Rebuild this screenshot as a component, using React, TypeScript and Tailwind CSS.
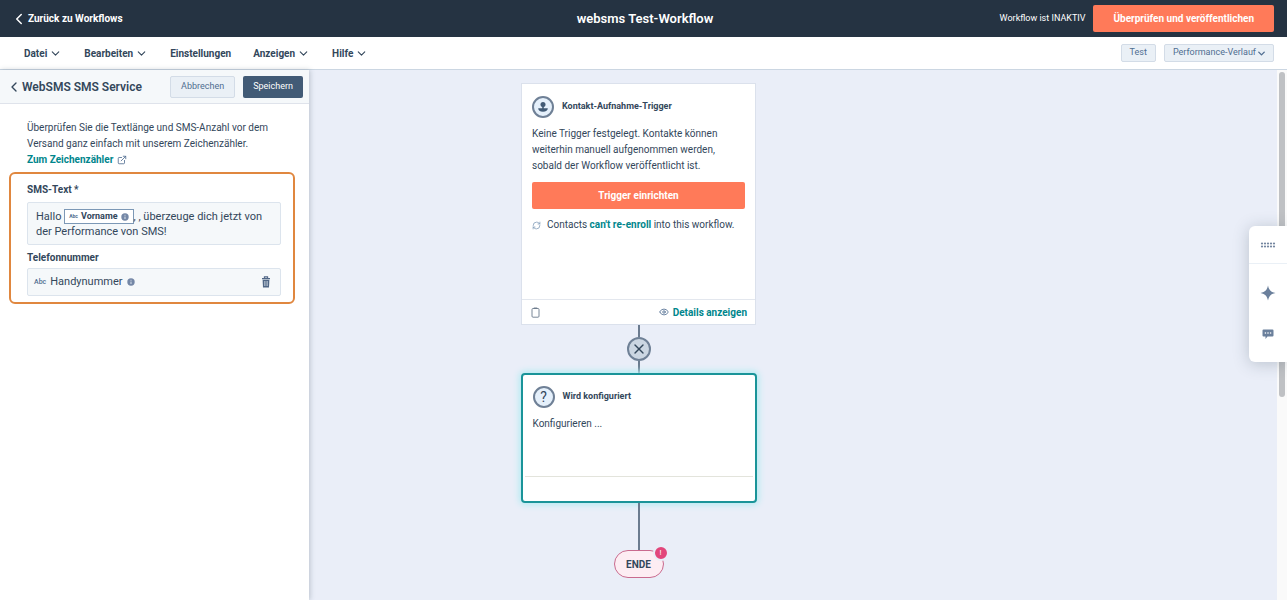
import type { ReactNode } from 'react';
import { ChevronDown, ChevronLeft, ExternalLink, Eye, RefreshCw, X } from 'lucide-react';

const MENU = [
  { label: 'Datei', dropdown: true },
  { label: 'Bearbeiten', dropdown: true },
  { label: 'Einstellungen', dropdown: false },
  { label: 'Anzeigen', dropdown: true },
  { label: 'Hilfe', dropdown: true },
];

function InfoDot() {
  return (
    <svg viewBox="0 0 8 8" className="size-2 shrink-0" aria-hidden="true">
      <circle cx="4" cy="4" r="3.7" fill="#7487a6" />
      <path d="M4 3.6v2.4M4 1.8v.9" stroke="#e8eef5" strokeWidth="0.9" />
    </svg>
  );
}

function TrashIcon() {
  return (
    <svg viewBox="0 0 10 12" className="h-3 w-[10px]" aria-hidden="true">
      <path d="M3.4 2V.9h3.2V2M1 2.6h8" fill="none" stroke="#516786" strokeWidth="1.1" />
      <path d="M1.6 3.8h6.8L8 11.4H2z" fill="#516786" />
      <path d="M3.6 5v5M5 5v5M6.4 5v5" stroke="#dfe7f0" strokeWidth="0.6" />
    </svg>
  );
}

function ClipboardIcon() {
  return (
    <svg viewBox="0 0 9 11" className="h-[11px] w-[9px]" fill="none" stroke="#6b7a8c" aria-hidden="true">
      <rect x="1" y="1.5" width="7" height="8.7" rx="1" strokeWidth="0.9" />
      <path d="M2.8 1.2h3.4" strokeWidth="1.3" />
    </svg>
  );
}

function NodeBadge({ children }: { children: ReactNode }) {
  return (
    <span className="flex size-[22px] shrink-0 items-center justify-center rounded-full border-2 border-[#6f8096] bg-[#e5f0fb] text-[#33475b]">
      {children}
    </span>
  );
}

function TopBar() {
  return (
    <header className="grid h-[37px] grid-cols-[1fr_auto_1fr] items-center bg-[#253342] pr-[13px] pl-4 text-white">
      <a href="#workflows" className="flex items-center text-[10px] font-bold">
        <ChevronLeft size={18} strokeWidth={2} className="-ml-1.5" />
        Zurück zu Workflows
      </a>
      <h1 className="text-[13px] font-semibold">websms Test-Workflow</h1>
      <div className="flex items-center justify-end gap-2">
        <span className="text-[9px]">Workflow ist INAKTIV</span>
        <button className="h-[27px] rounded-xs bg-[#ff7a59] px-5 text-[10px] font-bold">
          Überprüfen und veröffentlichen
        </button>
      </div>
    </header>
  );
}

function MenuBar() {
  return (
    <nav className="flex h-[33px] items-center border-b border-[#cbd6e2] bg-white pr-[13px] pl-6">
      <div className="flex items-center gap-[22px]">
        {MENU.map(item => (
          <button key={item.label} className="flex items-center gap-0.5 text-[10px] font-bold">
            {item.label}
            {item.dropdown && <ChevronDown size={13} strokeWidth={2} />}
          </button>
        ))}
      </div>
      <div className="ml-auto flex gap-2 text-[9px] text-[#506e91]">
        <button className="h-[18px] rounded-xs border border-[#d3dce7] bg-[#eaf0f6] px-2">Test</button>
        <button className="flex h-[18px] items-center rounded-xs border border-[#d3dce7] bg-[#eaf0f6] pr-1.5 pl-2">
          Performance-Verlauf
          <ChevronDown size={11} strokeWidth={3} />
        </button>
      </div>
    </nav>
  );
}

function ServicePanel() {
  return (
    <aside className="z-10 col-start-1 row-start-1 w-[309px] bg-white shadow-[1px_0_5px_rgba(45,62,80,0.25)]">
      <div className="flex h-[34px] items-center border-b border-[#dfe3eb] bg-[#f5f8fa] px-1.5">
        <button aria-label="Zurück">
          <ChevronLeft size={16} strokeWidth={2} />
        </button>
        <h2 className="text-[12px] font-semibold whitespace-nowrap">WebSMS SMS Service</h2>
        <div className="ml-auto flex gap-2 text-[9px]">
          <button className="h-[22px] rounded-xs border border-[#d3dce7] bg-[#eaf0f6] px-[10px] text-[#506e91]">
            Abbrechen
          </button>
          <button className="h-[22px] rounded-xs bg-[#425b76] px-[10px] text-white">Speichern</button>
        </div>
      </div>

      <div className="px-[9px] pt-4">
        <div className="px-[18px] text-[10px] leading-4">
          <p>Überprüfen Sie die Textlänge und SMS-Anzahl vor dem Versand ganz einfach mit unserem Zeichenzähler.</p>
          <a href="#zeichenzaehler" className="flex items-center gap-1 font-bold text-[#00868c]">
            Zum Zeichenzähler
            <ExternalLink size={10} className="text-[#506e91]" />
          </a>
        </div>

        <div className="mt-1 mr-[5px] rounded-md border-2 border-[#e0873f] pt-2 pr-3 pb-1.5 pl-4 text-[10px]">
          <span id="sms-label" className="block leading-4 font-bold">SMS-Text *</span>
          <div
            role="textbox"
            aria-multiline="true"
            aria-labelledby="sms-label"
            tabIndex={0}
            contentEditable
            suppressContentEditableWarning
            className="mt-1 rounded-xs border border-[#dce4ed] bg-[#f5f8fa] px-2 pt-1.5 pb-[5px] text-[11px] leading-[15px]"
          >
            <p className="flex items-center whitespace-pre">
              <span>Hallo </span>
              <span
                contentEditable={false}
                className="flex h-[15px] items-center gap-[3px] border border-[#7c98b6] bg-white px-1 text-[9px] font-bold"
              >
                <span className="text-[5px] text-[#506e91]">Abc</span>
                Vorname
                <InfoDot />
              </span>
              <span>, , überzeuge dich jetzt von</span>
            </p>
            <p>der Performance von SMS!</p>
          </div>

          <label htmlFor="phone" className="mt-[5px] block leading-4 font-bold">Telefonnummer</label>
          <div className="mt-0.5 flex h-7 items-center gap-1 rounded-xs border border-[#dce4ed] bg-[#f5f8fa] pr-[9px] pl-1.5">
            <span className="text-[7px] font-medium text-[#506e91]">Abc</span>
            <input
              id="phone"
              defaultValue="Handynummer"
              className="field-sizing-content bg-transparent text-[11px] outline-none"
            />
            <InfoDot />
            <button aria-label="Entfernen" className="ml-auto">
              <TrashIcon />
            </button>
          </div>
        </div>
      </div>
    </aside>
  );
}

function TriggerCard() {
  return (
    <section className="flex h-[242px] w-[235px] flex-col border border-[#dbe1ec] bg-white">
      <div className="flex-1 px-[10px] pt-3">
        <div className="flex items-center gap-2">
          <NodeBadge>
            <svg viewBox="0 0 12 12" className="size-3" fill="#425b76" aria-hidden="true">
              <circle cx="6" cy="3.4" r="2.5" />
              <path d="M5.2 5h1.6v2.2h4c0 2.2-1.8 3.6-4.8 3.6S1.2 9.4 1.2 7.2h4z" />
            </svg>
          </NodeBadge>
          <h3 className="text-[9px] font-bold">Kontakt-Aufnahme-Trigger</h3>
        </div>
        <p className="mt-2 text-[10px] leading-4">
          Keine Trigger festgelegt. Kontakte können weiterhin manuell aufgenommen werden, sobald der Workflow
          veröffentlicht ist.
        </p>
        <button className="mt-2 h-[27px] w-full rounded-xs bg-[#ff7a59] text-[10px] font-bold text-white">
          Trigger einrichten
        </button>
        <p className="mt-2 flex items-center text-[10px] leading-4">
          <RefreshCw size={9} className="mr-1.5 shrink-0 text-[#7c98b6]" />
          <span>
            Contacts <b className="font-bold text-[#00868c]">can't re-enroll</b> into this workflow.
          </span>
        </p>
      </div>
      <div className="flex h-[25px] items-center justify-between border-t border-[#e3e7ee] px-2">
        <button aria-label="Kopieren" className="pl-px">
          <ClipboardIcon />
        </button>
        <button className="flex items-center gap-1 text-[10px] font-bold text-[#00868c]">
          <Eye size={10} className="text-[#506e91]" />
          Details anzeigen
        </button>
      </div>
    </section>
  );
}

function Canvas() {
  return (
    <main className="col-start-1 row-start-1 flex flex-col items-center bg-[#eaeef8] pt-[13px]">
      <TriggerCard />
      <div className="h-3 w-0.5 bg-[#6b7b8f]" />
      <button
        aria-label="Aktion entfernen"
        className="flex size-6 items-center justify-center rounded-full border-2 border-[#6f8096] bg-[#cbd6e2]"
      >
        <X size={16} strokeWidth={2} />
      </button>
      <div className="h-3 w-0.5 bg-[#6b7b8f]" />

      <section className="flex h-[130px] w-[236px] flex-col rounded-sm border-2 border-[#1a9499] bg-white shadow-[0_0_6px_2px_#b5ebf2]">
        <div className="flex-1 px-[10px] pt-[11px]">
          <div className="flex items-center gap-2">
            <NodeBadge>
              <span className="text-[14px] leading-none">?</span>
            </NodeBadge>
            <h3 className="text-[9px] font-bold">Wird konfiguriert</h3>
          </div>
          <p className="mt-2 text-[10px] leading-4">Konfigurieren ...</p>
        </div>
        <div className="mx-0.5 h-[25px] border-t border-[#e3e4dc]" />
      </section>

      <div className="h-[47px] w-0.5 bg-[#6b7b8f]" />
      <div className="relative flex h-7 w-[50px] items-center justify-center rounded-full border border-[#c96a8e] bg-[#fdedf3] text-[10px] font-bold">
        ENDE
        <span className="absolute -top-1.5 -right-1.5 flex size-4 items-center justify-center rounded-full border-2 border-[#eaeef8] bg-[#e2467b] text-[8px] leading-none font-normal text-white">
          !
        </span>
      </div>
    </main>
  );
}

function ToolDock() {
  return (
    <div className="absolute top-[226px] right-0 z-20 flex w-[38px] flex-col items-center rounded-l-md bg-white shadow-[0_2px_16px_rgba(45,62,80,0.25)]">
      <button aria-label="Verschieben" className="flex h-[38px] w-full items-center justify-center border-b border-[#eaf0f6]">
        <svg viewBox="0 0 16 6" className="h-1.5 w-4" fill="#7486a0" aria-hidden="true">
          {[0, 1, 2, 3, 4].map(col => (
            <g key={col}>
              <circle cx={2 + col * 3} cy="1.5" r="1.1" />
              <circle cx={2 + col * 3} cy="4.5" r="1.1" />
            </g>
          ))}
        </svg>
      </button>
      <button aria-label="Assistent" className="mt-[21px]">
        <svg viewBox="0 0 16 16" className="size-4" fill="#6b809c" aria-hidden="true">
          <path d="M8 .5c.9 4.4 2.6 6.4 7.5 7.5-4.9 1.1-6.6 3.1-7.5 7.5C7.1 11.1 5.4 9.1.5 8 5.4 6.9 7.1 4.9 8 .5z" />
        </svg>
      </button>
      <button aria-label="Kommentare" className="mt-7 mb-[22px]">
        <svg viewBox="0 0 12 11" className="h-[11px] w-3" fill="#6b809c" aria-hidden="true">
          <path d="M1.5.5h9a1 1 0 0 1 1 1v5a1 1 0 0 1-1 1h-5l-2 2.5V7.500h-2a1 1 0 0 1-1-1v-5a1 1 0 0 1 1-1z" />
          <g fill="#fff">
            <circle cx="3.4" cy="4" r=".8" />
            <circle cx="6" cy="4" r=".8" />
            <circle cx="8.6" cy="4" r=".8" />
          </g>
        </svg>
      </button>
    </div>
  );
}

export default function App() {
  return (
    <div className="relative flex min-h-screen flex-col bg-white font-[Roboto,'Open_Sans',sans-serif] text-[#33475b]">
      <TopBar />
      <MenuBar />
      <div className="flex flex-1">
        <div className="grid flex-1">
          <Canvas />
          <ServicePanel />
        </div>
        <div className="w-[10px] bg-[#fafafa] px-0.5 pt-0.5">
          <div className="h-[325px] rounded-full bg-[#bfc1c4]" />
        </div>
      </div>
      <ToolDock />
    </div>
  );
}
